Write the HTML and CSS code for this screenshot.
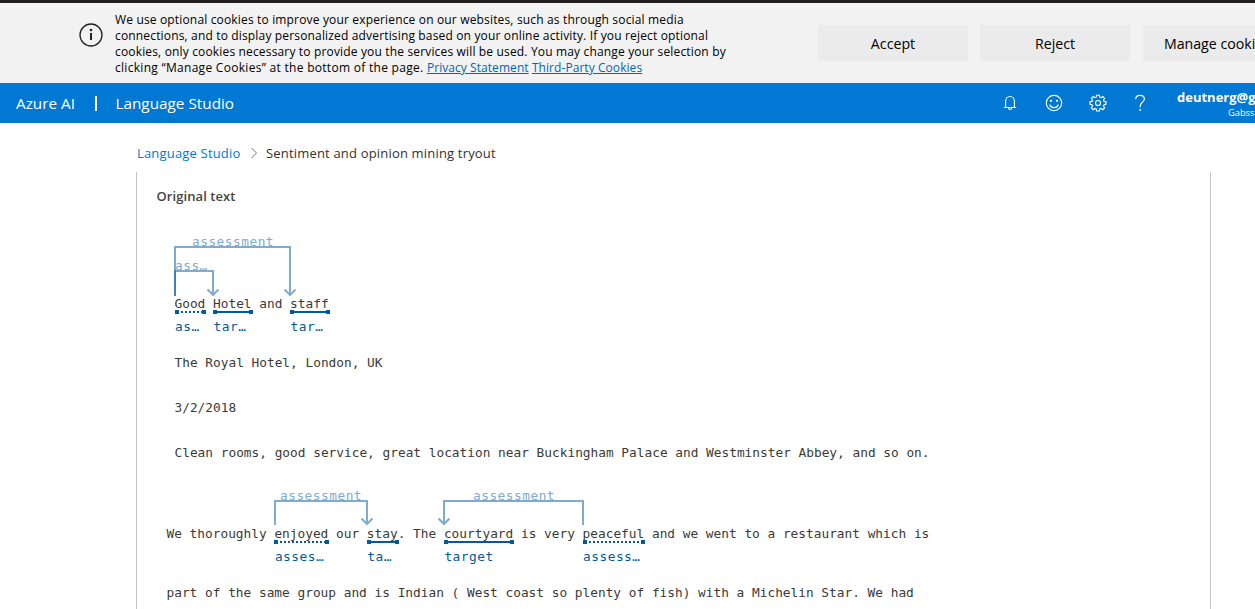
FILE: index.html
```html
<!DOCTYPE html>
<html lang="en">
<head>
<meta charset="utf-8">
<title>Language Studio</title>
<link rel="stylesheet" href="styles.css">
</head>
<body>
<div class="window-edge"></div>
<section class="cookies">
  <svg class="info" width="24" height="24" viewBox="0 0 24 24"><circle cx="12" cy="12" r="11" fill="none" stroke="#222" stroke-width="1.3"/><path d="M12 10v7" stroke="#222" stroke-width="2"/><circle cx="12" cy="7" r="1.3" fill="#222"/></svg>
  <p class="notice">We use optional cookies to improve your experience on our websites, such as through social media<br>connections, and to display personalized advertising based on your online activity. If you reject optional<br>cookies, only cookies necessary to provide you the services will be used. You may change your selection by<br><span class="closing">clicking “Manage Cookies” at the bottom of the page. </span><a href="#">Privacy Statement</a> <a href="#">Third-Party Cookies</a></p>
  <div class="choices">
    <button>Accept</button><button>Reject</button><button class="manage">Manage cookies</button>
  </div>
</section>
<header class="bar">
  <span class="brand">Azure AI</span><span class="pipe"></span><span class="product">Language Studio</span>
  <nav class="tools">
    <svg width="16" height="18" viewBox="0 0 16 18"><path d="M3.6 13V7.4a4.400 4.900 0 0 1 8.800 0V13M1.800 13.500h12.400M6.500 14a1.600 1.500 0 0 0 3.200 0"/></svg>
    <svg width="18" height="18" viewBox="0 0 18 18"><circle cx="9" cy="9" r="7.700"/><path d="M4.700 10.500a4.500 4.500 0 0 0 8.600 0"/><circle class="solid" cx="6" cy="6.800" r="1.100"/><circle class="solid" cx="12" cy="6.800" r="1.100"/></svg>
    <svg width="18" height="18" viewBox="0 0 18 18"><path d="M7.600 1.200h2.800l.4 2 1.200.5 1.800-1.200 1.800 1.900-1.100 1.800.5 1.200 2 .4v2.600l-2 .4-.5 1.200 1.100 1.800-1.800 1.900-1.800-1.200-1.200.5-.4 2H7.600l-.4-2-1.200-.5-1.800 1.200-1.800-1.900L3.500 12 3 10.800l-2-.4V7.800l2-.4.5-1.200-1.100-1.800 1.800-1.900L6 3.700l1.200-.5z"/><circle cx="9" cy="9" r="2.500"/></svg>
    <svg width="14" height="18" viewBox="0 0 14 18"><path d="M2.700 5.200C2.700 2.800 4.300 1.300 7 1.300s4.400 1.500 4.400 3.700C11.400 8 7.200 8.600 7.200 12v1.200"/><circle class="solid" cx="7.200" cy="16" r=".9"/></svg>
  </nav>
  <div class="account"><b>deutnerg@g</b><span>Gabss</span></div>
</header>
<div class="crumbs"><a class="home" href="#">Language Studio</a><svg width="8" height="12" viewBox="0 0 8 12"><path d="M1.500 1l5 5-5 5" fill="none" stroke="#777"/></svg><span class="here">Sentiment and opinion mining tryout</span></div>
<main class="panel">
  <h1>Original text</h1>
  <div class="row opening"><span class="token assess">Good<i>as…</i></span> <span class="token">Hotel<i>tar…</i></span> and <span class="token">staff<i>tar…</i></span>
    <svg class="links first" width="130" height="52" viewBox="174 244 130 52"><path d="M175 296V247H290V295M284.500 289.500l5.500 5.500 5.500-5.500"/><path d="M175 296V271H213V295M207.500 289.500l5.500 5.500 5.500-5.500"/></svg>
    <span class="relation r1">assessment</span><span class="relation r2">ass…</span></div>
  <div class="row address">The Royal Hotel, London, UK</div>
  <div class="row date">3/2/2018</div>
  <div class="row summary">Clean rooms, good service, great location near Buckingham Palace and Westminster Abbey, and so on.</div>
  <div class="row stay">We thoroughly <span class="token assess">enjoyed<i>asses…</i></span> our <span class="token">stay<i>ta…</i></span>. The <span class="token">courtyard<i>target</i></span> is very <span class="token assess">peaceful<i>assess…</i></span> and we went to a restaurant which is
    <svg class="links second" width="320" height="30" viewBox="272 496 320 30"><path d="M275 525V501H367V524M361.500 518.500l5.500 5.500 5.500-5.500M583 525V501H444V524M438.500 518.500l5.500 5.500 5.500-5.500"/></svg>
    <span class="relation r3">assessment</span><span class="relation r4">assessment</span></div>
  <div class="row last">part of the same group and is Indian ( West coast so plenty of fish) with a Michelin Star. We had</div>
</main>
</body>
</html>
```
FILE: styles.css
```css
* { box-sizing: border-box; }
body { margin: 0; width: 1255px; height: 609px; overflow: hidden; background: #fff; font-family: "Open Sans", "Noto Sans", sans-serif; color: #323130; display: flex; flex-direction: column; }
.window-edge { height: 3px; background: #231f20; flex: none; }
.cookies { height: 80px; flex: none; background: #f2f2f2; display: flex; align-items: flex-start; padding-left: 79px; overflow: hidden; }
.info { margin-top: 20px; flex: none; }
.notice { margin: 9px 0 0 12px; width: 703px; flex: none; font-size: 12px; line-height: 16px; letter-spacing: .16px; color: #000; white-space: nowrap; }
.closing { letter-spacing: .29px; }
.notice a { color: #0067b8; text-decoration: underline; letter-spacing: .06px; }
.choices { display: flex; margin-top: 22px; gap: 12px; flex: none; }
.choices button { width: 150px; height: 36px; padding: 0; border: 0; background: #ebebeb; font: 14.200px "Open Sans", sans-serif; color: #000; }
.choices .manage { margin-left: 1px; padding-right: 2px; }
.bar { height: 40px; flex: none; background: #0078d4; color: #fff; display: flex; align-items: center; padding-left: 16px; font-size: 15.300px; }
.brand { width: 79px; flex: none; white-space: nowrap; }
.pipe { width: 1.500px; height: 15px; flex: none; background: #fff; margin-right: 19px; }
.product { width: 886.500px; flex: none; white-space: nowrap; }
.tools { display: flex; align-items: center; width: 175px; flex: none; }
.tools svg { fill: none; stroke: #fff; stroke-width: 1.150; flex: none; margin-right: 27px; }
.tools svg + svg { margin-right: 26px; }
.tools svg:last-child { margin-right: 0; }
.tools .solid { fill: #fff; stroke: none; }
.account { display: flex; flex-direction: column; flex: none; white-space: nowrap; padding-top: 2px; }
.account b { font-size: 13px; line-height: 17px; font-weight: 700; }
.account span { font-size: 9.300px; line-height: 14px; margin-left: 51px; }
.crumbs { display: flex; align-items: center; height: 49px; flex: none; padding: 11px 0 0 137px; font-size: 13px; letter-spacing: .18px; white-space: nowrap; }
.home { color: #0078d4; text-decoration: none; width: 113px; padding-bottom: 1px; }
.crumbs svg { margin-right: 8px; }
.panel { flex: none; width: 1075px; height: 437px; margin-left: 136px; border: solid #c3c3c3; border-width: 0 1px; padding-left: 29.500px; overflow: hidden; }
h1 { font-size: 13px; line-height: 20px; font-weight: 600; letter-spacing: .08px; margin: 14px 0 0 -10px; color: #444; }
.row { position: relative; height: 20px; line-height: 22px; font-family: "DejaVu Sans Mono", monospace; font-size: 12.800px; color: #3b3a39; white-space: nowrap; padding-left: 8px; }
.opening { margin-top: 87px; }
.address { margin-top: 39px; }
.date, .summary { margin-top: 25px; }
.stay { margin-top: 61px; padding-left: 0; }
.last { margin-top: 39px; padding-left: 0; }
.token { position: relative; display: inline-block; }
.token::before { content: ""; position: absolute; left: 2px; right: 1px; top: 18px; height: 2px; background: #005a9e; }
.token.assess::before { background: repeating-linear-gradient(90deg, #005a9e 0 2px, transparent 2px 4px); }
.token::after { content: ""; position: absolute; left: 0; right: -1px; top: 17px; height: 4px; border: solid #005a9e; border-width: 0 4px; }
.token i { position: absolute; left: .5px; top: 24px; line-height: 20px; font-style: normal; letter-spacing: .5px; color: #005a9e; }
.links { position: absolute; fill: none; stroke: #005a9e; stroke-width: 2; }
.links path { stroke-opacity: .5; }
.first { left: 7.500px; top: -49px; }
.second { left: 105.500px; top: -27px; }
.relation { position: absolute; color: #7facce; letter-spacing: .5px; }
.r1 { left: 25.500px; top: -62px; }
.r2 { left: 8.500px; top: -38px; }
.r3 { left: 113.500px; top: -38px; }
.r4 { left: 306.500px; top: -38px; }
```
